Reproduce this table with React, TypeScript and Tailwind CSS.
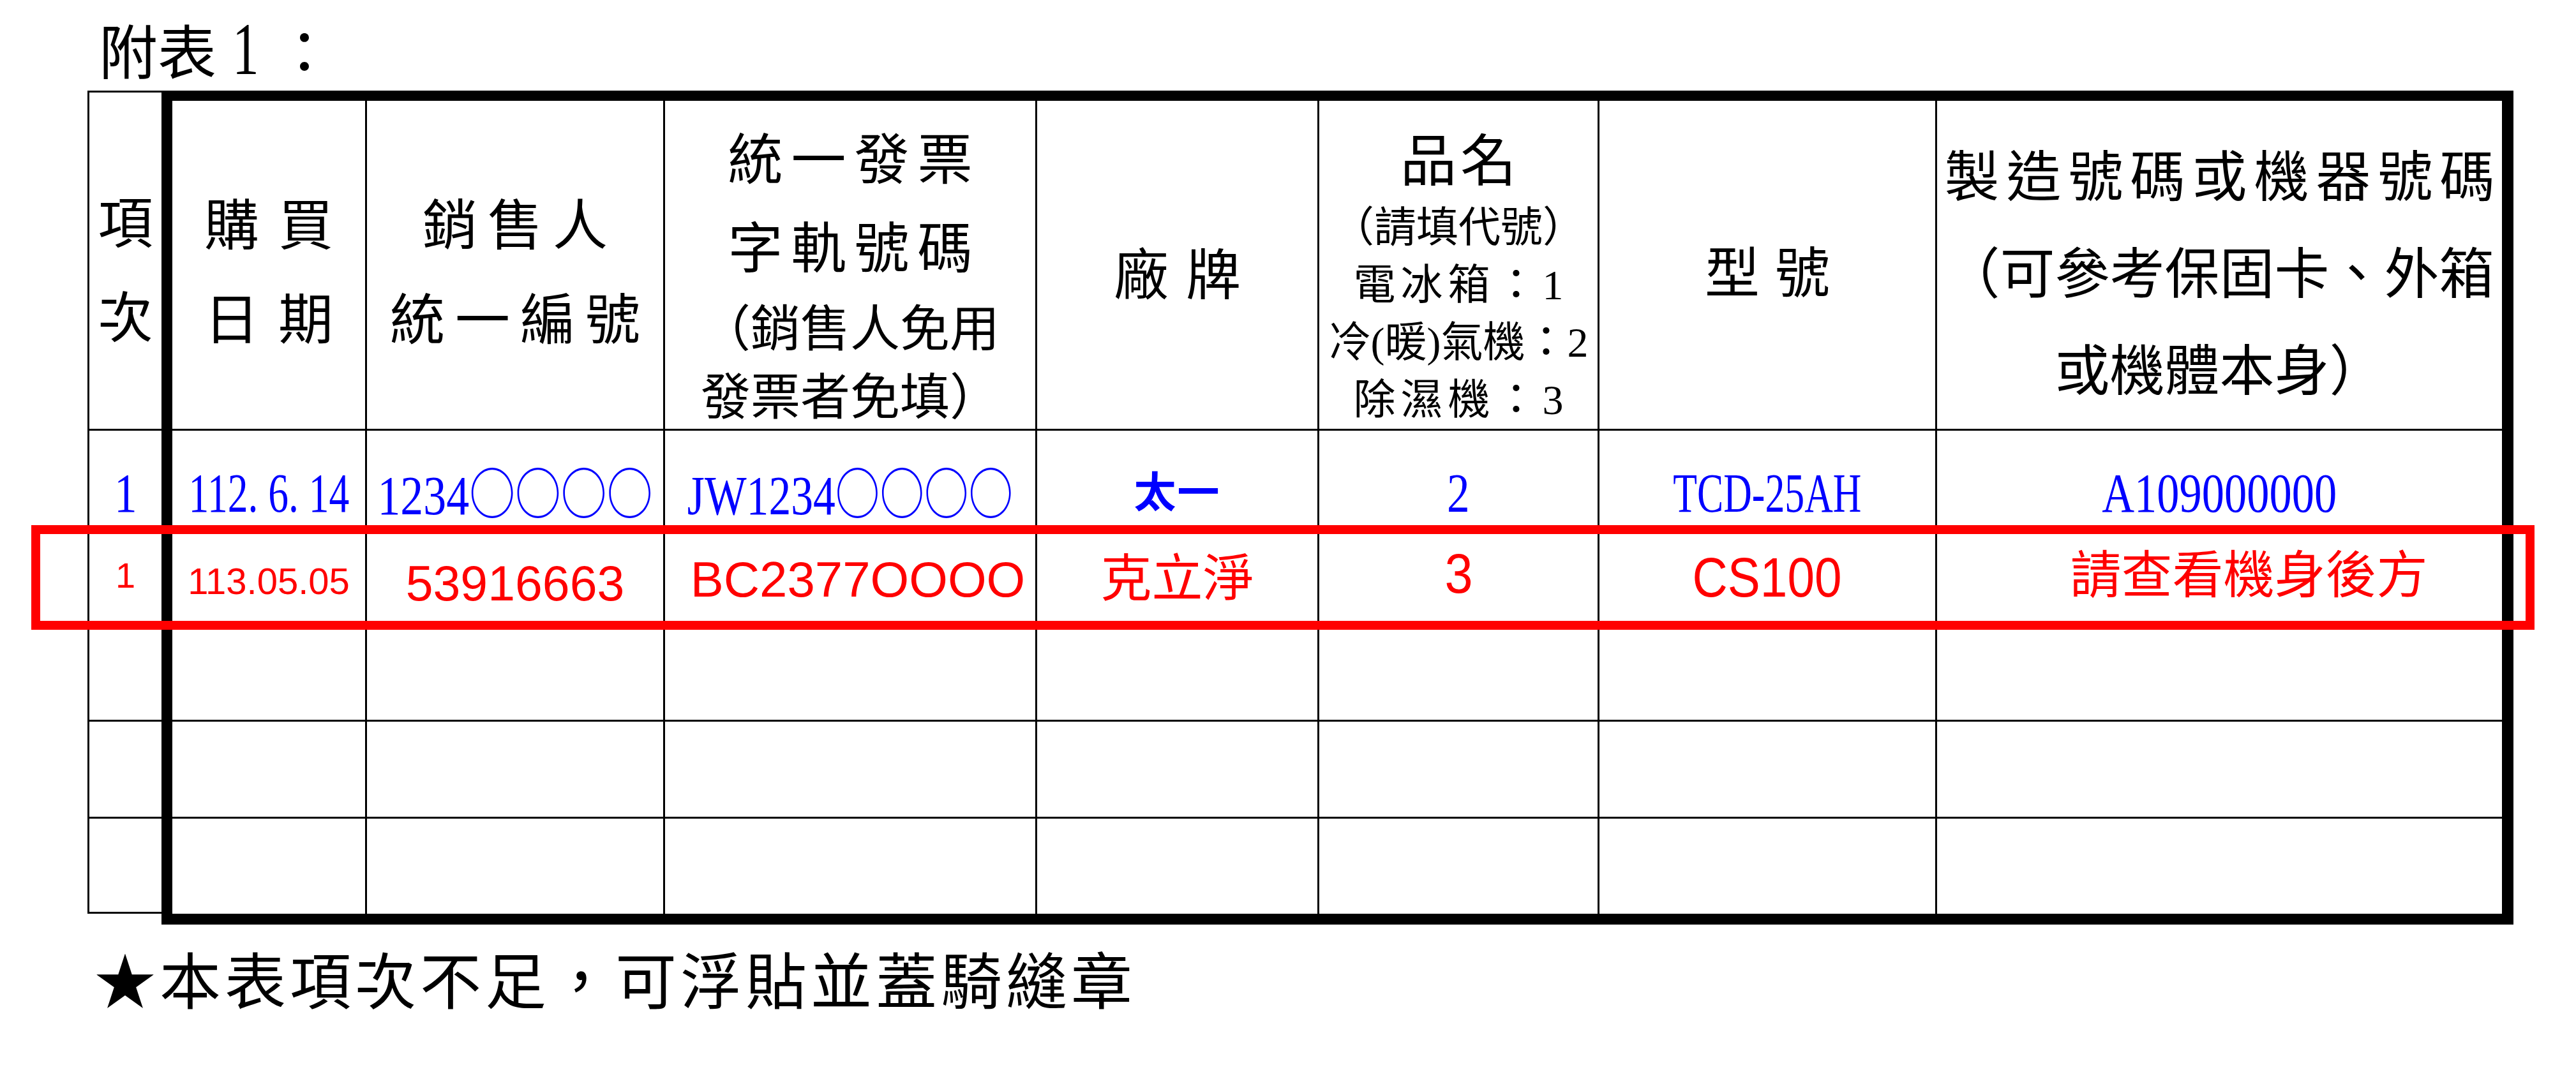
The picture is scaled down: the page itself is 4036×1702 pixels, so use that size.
import React from "react";

const serif = "font-['Liberation_Serif','Noto_Sans_CJK_TC',serif]";
const sans = "font-['Liberation_Sans','Noto_Sans_CJK_TC',sans-serif]";
const cjk = "font-['Noto_Sans_CJK_TC',sans-serif]";

type CellProps = {
  first?: boolean;
  head?: boolean;
  className?: string;
  children?: React.ReactNode;
};

const Cell = ({ first, head, className = "", children }: CellProps) => (
  <div
    className={`${first ? "" : "border-l-[3px]"} ${
      head ? "h-[514px]" : "h-[152px] border-t-[3px]"
    } border-black flex flex-col items-center ${className}`}
  >
    {children}
  </div>
);

const Circles = () => <span className={cjk}>○○○○</span>;

const Blue = ({
  scale,
  children,
}: {
  scale: string;
  children: React.ReactNode;
}) => (
  <span
    className={`inline-block whitespace-nowrap text-[87px] leading-none text-[#0000ff] ${scale}`}
  >
    {children}
  </span>
);

const Red = ({
  size,
  scale = "",
  children,
}: {
  size: string;
  scale?: string;
  children: React.ReactNode;
}) => (
  <span
    className={`inline-block whitespace-nowrap leading-none text-[#ff0000] ${sans} ${size} ${scale}`}
  >
    {children}
  </span>
);

const App = () => {
  return (
    <div
      className={`relative w-[4036px] h-[1702px] bg-white text-black overflow-hidden pt-[39px] pl-[137px] ${serif}`}
    >
      {/* 標題 */}
      <div className="ml-[18px] h-[92px] text-[92px] leading-none whitespace-nowrap">
        附表
        <span className="inline-block align-top h-[92px] w-[92px] text-center text-[116px] leading-[92px] scale-x-[0.72] -translate-y-[8px]">
          1
        </span>
        ：
      </div>

      {/* 表格 */}
      <div className="mt-[11px] flex items-start">
        {/* 項次欄 */}
        <div className="w-[116px] border-l-[3px] border-t-[3px] border-b-[3px] border-black flex flex-col">
          <div className="h-[527px] flex flex-col items-center justify-center pt-[35px] text-[86px]">
            <div className="leading-[148px]">項</div>
            <div className="leading-[148px]">次</div>
          </div>
          <div className="h-[152px] border-t-[3px] border-black flex items-center justify-center pt-[46px]">
            <Blue scale="scale-x-[0.82]">1</Blue>
          </div>
          <div className="h-[152px] border-t-[3px] border-black flex items-center justify-center">
            <Red size="text-[56px]">1</Red>
          </div>
          <div className="h-[152px] border-t-[3px] border-black" />
          <div className="h-[152px] border-t-[3px] border-black" />
          <div className="h-[149px] border-t-[3px] border-black" />
        </div>

        {/* 粗框主表 */}
        <div className="border-t-[16px] border-l-[17px] border-r-[18px] border-b-[17px] border-black">
          <div className="grid grid-cols-[302px_467px_583px_442px_439px_529px_888px]">
            {/* 表頭 */}
            <Cell first head className="justify-center pt-[28px] text-[86px]">
              <div className="leading-[148px] tracking-[30px] pl-[30px]">購買</div>
              <div className="leading-[148px] tracking-[30px] pl-[30px]">日期</div>
            </Cell>
            <Cell head className="justify-center pt-[28px] text-[86px]">
              <div className="leading-[148px] tracking-[16px] pl-[16px]">銷售人</div>
              <div className="leading-[148px] tracking-[16px] pl-[16px]">統一編號</div>
            </Cell>
            <Cell head className="justify-start pt-[19px]">
              <div className="text-[86px] leading-[150px] tracking-[13px] pl-[13px]">統一發票</div>
              <div className="text-[86px] leading-[128px] tracking-[13px] pl-[13px]">字軌號碼</div>
              <div className="text-[78px] leading-[124px] whitespace-nowrap">（銷售人免用</div>
              <div className="text-[78px] leading-[90px] whitespace-nowrap">發票者免填）</div>
            </Cell>
            <Cell head className="justify-center pt-[36px] text-[86px]">
              <div className="leading-none tracking-[27px] pl-[27px]">廠牌</div>
            </Cell>
            <Cell head className="justify-start pt-[38px]">
              <div className="text-[88px] leading-[116px] tracking-[6px] pl-[6px]">品名</div>
              <div className="text-[66px] leading-[90px] whitespace-nowrap">（請填代號）</div>
              <div className="text-[66px] leading-[90px] whitespace-nowrap tracking-[8px] pl-[8px]">電冰箱：1</div>
              <div className="text-[66px] leading-[90px] whitespace-nowrap">冷(暖)氣機：2</div>
              <div className="text-[66px] leading-[90px] whitespace-nowrap tracking-[8px] pl-[8px]">除濕機：3</div>
            </Cell>
            <Cell head className="justify-center pt-[30px] text-[86px]">
              <div className="leading-none tracking-[24px] pl-[24px]">型號</div>
            </Cell>
            <Cell head className="justify-center pt-[32px] text-[86px]">
              <div className="leading-[152px] whitespace-nowrap tracking-[11px] pl-[11px]">製造號碼或機器號碼</div>
              <div className="leading-[152px] whitespace-nowrap">（可參考保固卡、外箱</div>
              <div className="leading-[152px] whitespace-nowrap">或機體本身）</div>
            </Cell>

            {/* 範例列（藍） */}
            <Cell first className="justify-center pt-[46px]">
              <Blue scale="scale-x-[0.73]">112. 6. 14</Blue>
            </Cell>
            <Cell className="justify-center pt-[46px]">
              <Blue scale="scale-x-[0.826]">
                1234<Circles />
              </Blue>
            </Cell>
            <Cell className="justify-center pt-[46px]">
              <Blue scale="scale-x-[0.8]">
                JW1234<Circles />
              </Blue>
            </Cell>
            <Cell className="justify-center pt-[46px]">
              <span className="text-[66px] leading-none font-bold text-[#0000ff] tracking-[2px]">太一</span>
            </Cell>
            <Cell className="justify-center pt-[46px]">
              <Blue scale="scale-x-[0.82]">2</Blue>
            </Cell>
            <Cell className="justify-center pt-[46px]">
              <Blue scale="scale-x-[0.71]">TCD-25AH</Blue>
            </Cell>
            <Cell className="justify-center pt-[46px]">
              <Blue scale="scale-x-[0.81]">A109000000</Blue>
            </Cell>

            {/* 填寫列（紅） */}
            <Cell first className="justify-center pt-[18px]">
              <Red size="text-[58px]">113.05.05</Red>
            </Cell>
            <Cell className="justify-center pt-[26px]">
              <Red size="text-[77px]">53916663</Red>
            </Cell>
            <Cell className="justify-center pt-[12px] pl-[24px]">
              <Red size="text-[78px]">BC2377OOOO</Red>
            </Cell>
            <Cell className="justify-center pt-[11px]">
              <Red size="text-[80px]">克立淨</Red>
            </Cell>
            <Cell className="justify-center pb-[6px]">
              <Red size="text-[88px]" scale="scale-x-[0.9]">3</Red>
            </Cell>
            <Cell className="justify-center pt-[6px]">
              <Red size="text-[88px]" scale="scale-x-[0.87]">CS100</Red>
            </Cell>
            <Cell className="justify-center pl-[92px]">
              <Red size="text-[80px]">請查看機身後方</Red>
            </Cell>

            {/* 空白列 */}
            {[0, 1, 2].map((r) =>
              [0, 1, 2, 3, 4, 5, 6].map((c) => (
                <Cell key={`${r}-${c}`} first={c === 0} />
              ))
            )}
          </div>
        </div>
      </div>

      {/* 註記 */}
      <div
        className={`mt-[35px] ml-[11px] text-[96px] leading-none tracking-[6px] whitespace-nowrap ${cjk}`}
      >
        ★本表項次不足，可浮貼並蓋騎縫章
      </div>

      {/* 紅色標示框 */}
      <div className="absolute left-[49px] top-[823px] w-[3922px] h-[164px] border-[14px] border-[#ff0000]" />
    </div>
  );
};

export default App;
